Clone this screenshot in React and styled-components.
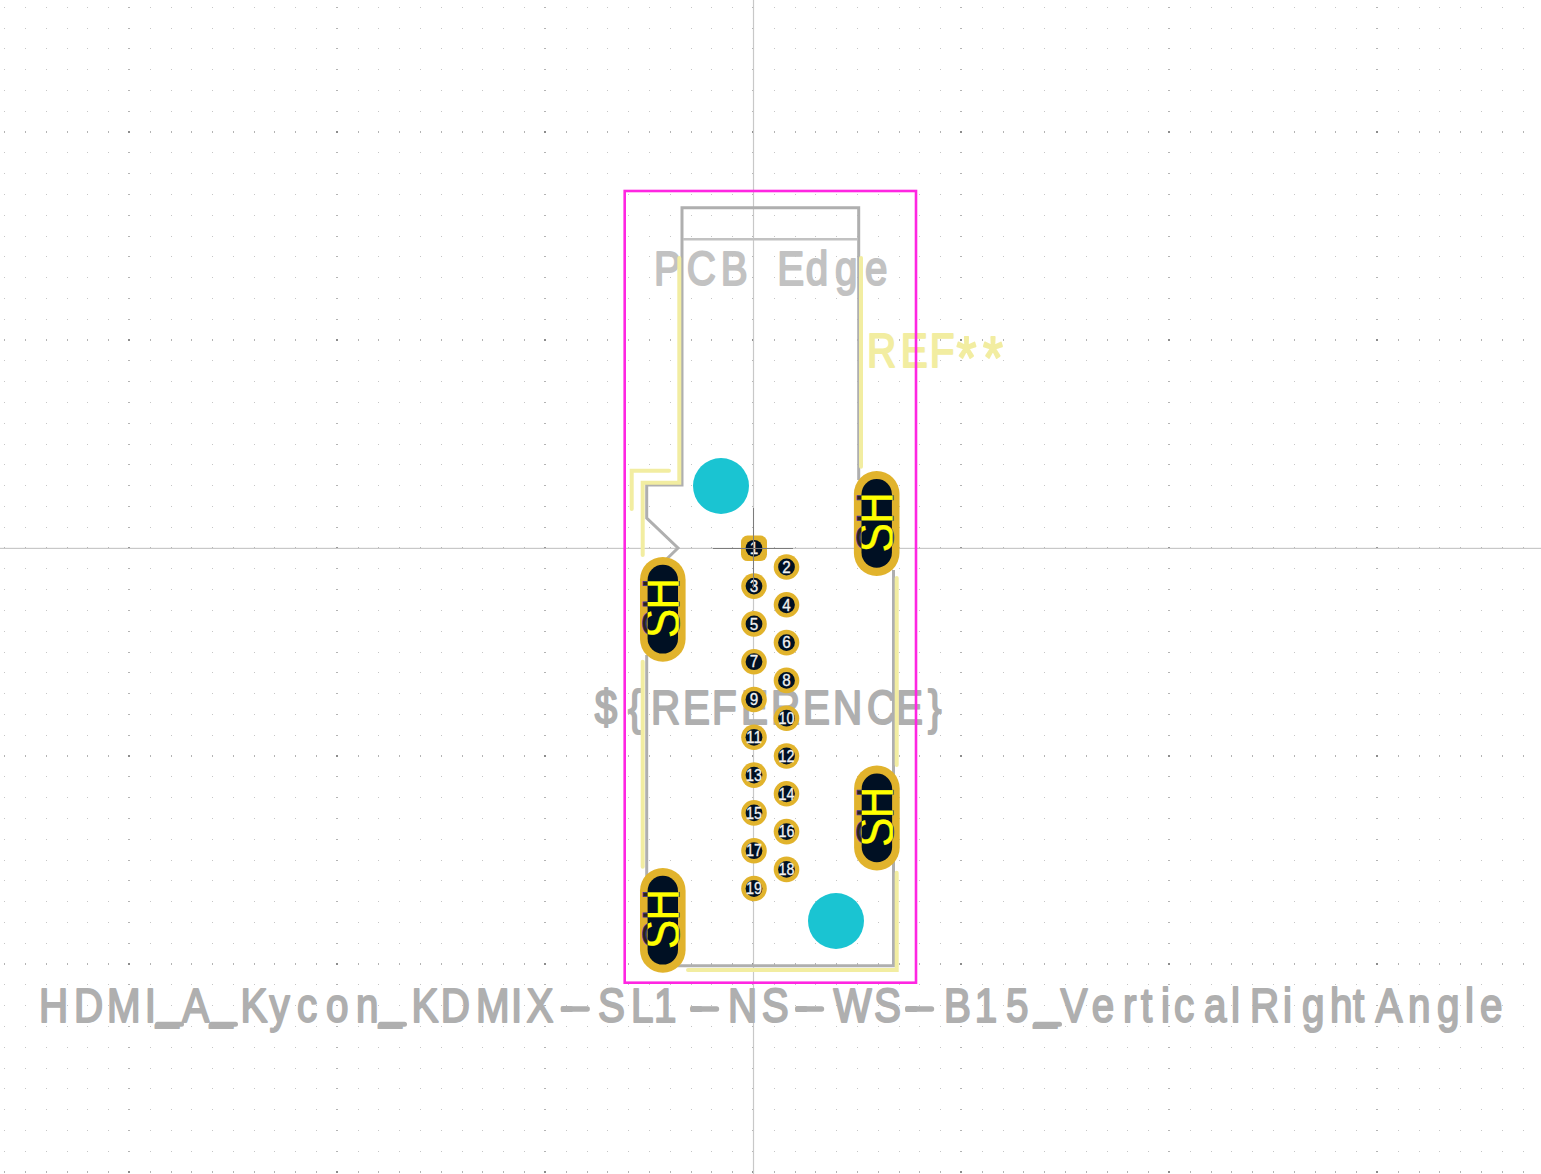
import React from "react";
import styled, { createGlobalStyle } from "styled-components";

const Page = createGlobalStyle`
  html, body { margin: 0; padding: 0; background: #ffffff; overflow: hidden; }
`;

const tones = { fab: "#afafaf", dwgs: "#c2c2c2", silk: "#f2eda1" };

const Canvas = styled.svg`
  display: block;
  width: 1541px;
  height: 1174px;
  background: #ffffff;
`;
const GridDots = styled.path`
  fill: ${(p) => p.$fill};
  shape-rendering: crispEdges;
`;
const Axis = styled.rect`
  fill: ${(p) => p.$fill || "#c8c8c8"};
`;
const Label = styled.text`
  font-family: "Liberation Sans", Arial, sans-serif;
  font-size: 47.5px;
  fill: ${(p) => tones[p.$tone]};
  stroke: ${(p) => tones[p.$tone]};
  stroke-width: 2px;
  stroke-linejoin: round;
`;
const StarRun = styled.tspan`
  font-size: 60px;
`;
const Trace = styled.path`
  fill: none;
  stroke: ${(p) => tones[p.$tone]};
  stroke-width: ${(p) => p.$w || 3}px;
  stroke-linecap: ${(p) => (p.$round ? "round" : "butt")};
  stroke-linejoin: miter;
`;
const Courtyard = styled.rect`
  fill: none;
  stroke: #ff26e2;
  stroke-width: 2.6px;
`;
const Hole = styled.circle`
  fill: #1ac4d2;
`;
const Ring = styled.circle`
  fill: #e1b32c;
`;
const SquareRing = styled.rect`
  fill: #e1b32c;
`;
const Drill = styled.circle`
  fill: #001023;
`;
const SlotBody = styled.rect`
  fill: ${(p) => (p.$inner ? "#001023" : "#e1b32c")};
`;
const PadName = styled.text`
  font-family: "Liberation Sans", Arial, sans-serif;
  font-size: 16px;
  fill: #f2f2f2;
  stroke: #f2f2f2;
  stroke-width: 0.3px;
  text-anchor: middle;
`;
const NetName = styled.text`
  font-family: "Liberation Sans", Arial, sans-serif;
  font-size: 52px;
  fill: ${(p) => (p.$under ? "#2b2418" : "#ffff00")};
  stroke: ${(p) => (p.$under ? "#3f3390" : "#ffff00")};
  stroke-width: ${(p) => (p.$under ? 0.9 : 0.3)}px;
`;

const side = (ch) => {
  if (ch === "_") return -1;
  if (ch === "-") return 0.6;
  if ("CcoedaSgsB".includes(ch)) return 1;
  if ("yVWAXvK*".includes(ch)) return -0.6;
  return 2;
};

const SX = 0.85;
const placed = (text, lefts) =>
  [...text].map((ch, i) => ((lefts[i] - side(ch)) / SX).toFixed(2)).join(" ");

const FOOT = "HDMI_A_Kycon_KDMIX-SL1-NS-WS-B15_VerticalRightAngle";
const FOOT_X = [
  41, 76, 109, 146.7, 155, 181.7, 209, 240, 269, 298, 327, 358, 378, 411, 442.7, 478, 513, 526,
  560.7, 599, 633, 656, 690, 730, 762.7, 795, 833, 875, 905, 945, 976.7, 1008, 1033, 1060, 1092.7,
  1125, 1143, 1163, 1175, 1205, 1233, 1252, 1285, 1303, 1332, 1355, 1375, 1410, 1438, 1467, 1481,
];
const DASHES = [560.7, 690, 795, 905];
const BARS = [155, 209, 378, 1033];

/* Underscores sit higher in the reference's stroke font than in this one. */
const footRuns = FOOT.split(/(_)/)
  .filter(Boolean)
  .map((run, i, all) => {
    const prevBar = i > 0 && all[i - 1] === "_";
    const dy = run === "_" ? -4 : prevBar ? 4 : undefined;
    return (
      <tspan key={i} dy={dy}>
        {run}
      </tspan>
    );
  });

const OX = 753.4;
const OY = 548;
const STEP = 20.8;

function gridPaths() {
  const out = { minor: "", semi: "", major: "" };
  for (let i = -37; i <= 38; i++) {
    for (let j = -27; j <= 30; j++) {
      const px = OX + i * STEP;
      const py = OY + j * STEP;
      const mc = i % 10 === 0;
      const mr = j % 10 === 0;
      const x = mc ? Math.floor(px) - 1 : Math.floor(px);
      const y = mr ? Math.floor(py) - 1 : Math.floor(py);
      const w = mc ? 2 : 1;
      const h = mr ? 2 : 1;
      const key = mc && mr ? "major" : mc || mr ? "semi" : "minor";
      out[key] += `M${x} ${y}h${w}v${h}h${-w}z`;
    }
  }
  return out;
}
const grid = gridPaths();

const PITCH = 37.8;
const odd = Array.from({ length: 10 }, (_, k) => ({ n: 2 * k + 1, x: 754, y: 548.3 + k * PITCH }));
const even = Array.from({ length: 9 }, (_, k) => ({ n: 2 * k + 2, x: 786.5, y: 567 + k * PITCH }));
const slots = [
  { x: 876.7, y: 523.5 },
  { x: 662.8, y: 609.3 },
  { x: 876.9, y: 818 },
  { x: 662.8, y: 920.3 },
];

function Slot({ x, y }) {
  const glyphs = { transform: "translate(16 29) rotate(-90) scale(0.85 1)", x: "0 33.5" };
  return (
    <g transform={`translate(${x} ${y})`}>
      <SlotBody x={-22.8} y={-52.4} width={45.6} height={104.8} rx={22.8} />
      <NetName $under {...glyphs}>SH</NetName>
      <SlotBody $inner x={-15.2} y={-44.5} width={30.4} height={88.8} rx={15.2} />
      <g clipPath="url(#slotHole)">
        <NetName {...glyphs}>SH</NetName>
      </g>
    </g>
  );
}

export default function App() {
  return (
    <>
      <Page />
      <Canvas viewBox="0 0 1541 1174">
        <defs>
          <clipPath id="slotHole">
            <rect x={-15.2} y={-44.5} width={31.2} height={88.8} rx={10} />
          </clipPath>
        </defs>

        <GridDots $fill="#c6c6c6" d={grid.minor} />
        <GridDots $fill="#b4b4b4" d={grid.semi} />
        <GridDots $fill="#8c8c8c" d={grid.major} />
        <Axis x={752.9} y={0} width={1.2} height={1174} />
        <Axis x={0} y={547.8} width={1541} height={1.2} />

        <Label $tone="dwgs" transform={`translate(0 285) scale(${SX} 1)`} x={placed("PCB Edge", [656, 687.7, 721.7, 750, 779.3, 806.7, 836, 866])}>
          PCB Edge
        </Label>
        <Label $tone="fab" transform={`translate(0 724) scale(${SX} 1)`} x={placed("${REFERENCE}", [596.7, 630, 653, 685, 714, 743, 773, 805, 835, 868, 898, 930])}>
          {"${REFERENCE}"}
        </Label>
        <Label $tone="fab" transform={`translate(0 1021.5) scale(${SX} 1)`} x={placed(FOOT, FOOT_X)}>
          {footRuns}
        </Label>
        {DASHES.map((x) => (
          <Trace key={x} $tone="fab" $w={5.4} $round d={`M${x + 2.7} 1009H${x + 26.5}`} />
        ))}
        {BARS.map((x) => (
          <Trace key={x} $tone="fab" $w={5} $round d={`M${x + 2.5} 1024.2H${x + 26.5}`} />
        ))}

        <Trace $tone="fab" d="M858.7 480V207.7H682V485H646.7V518L678 548L666.7 559" />
        <Trace $tone="dwgs" $w={2.6} d="M683 239.3H857.5" />
        <Trace $tone="fab" d="M646.7 655V880" />
        <Trace $tone="fab" d="M660 965.7H893.5V860" />
        <Trace $tone="fab" d="M893.5 775V570" />

        <Trace $tone="silk" $w={4} $round d="M679.3 258V482.7H642.7V555" />
        <Trace $tone="silk" $w={4} $round d="M861 258V466.7" />
        <Trace $tone="silk" $w={4} $round d="M669 470.7H631.7V509" />
        <Trace $tone="silk" $w={4} $round d="M642.7 661.7V866.7" />
        <Trace $tone="silk" $w={4} $round d="M896.7 578V765" />
        <Trace $tone="silk" $w={4} $round d="M896.7 872.7V970H688" />

        <Label $tone="silk" transform={`translate(0 367) scale(${SX} 1)`} x={placed("REF**", [869, 902.7, 931.7, 956, 982.5])}>
          REF
          <StarRun dy={11}>**</StarRun>
        </Label>

        <Courtyard x={624.7} y={191} width={291.3} height={791.7} />

        <Hole cx={721} cy={486} r={28} />
        <Hole cx={836} cy={921} r={28} />

        {slots.map((s) => (
          <Slot key={s.y} x={s.x} y={s.y} />
        ))}

        {[...odd, ...even].map((p) => (
          <g key={p.n}>
            {p.n === 1 ? (
              <SquareRing x={p.x - 13} y={p.y - 12.8} width={26} height={25.6} rx={6.5} />
            ) : (
              <Ring cx={p.x} cy={p.y} r={12.8} />
            )}
            <Drill cx={p.x} cy={p.y} r={8.4} />
            <PadName x={p.x} y={p.y + 5.7} textLength={p.n > 9 ? 16 : 8.5} lengthAdjust="spacingAndGlyphs">
              {p.n}
            </PadName>
          </g>
        ))}

        <Axis $fill="#7c7c7c" x={713} y={548} width={80} height={1} />
        <Axis $fill="#7c7c7c" x={753} y={508} width={1} height={80} />
      </Canvas>
    </>
  );
}
